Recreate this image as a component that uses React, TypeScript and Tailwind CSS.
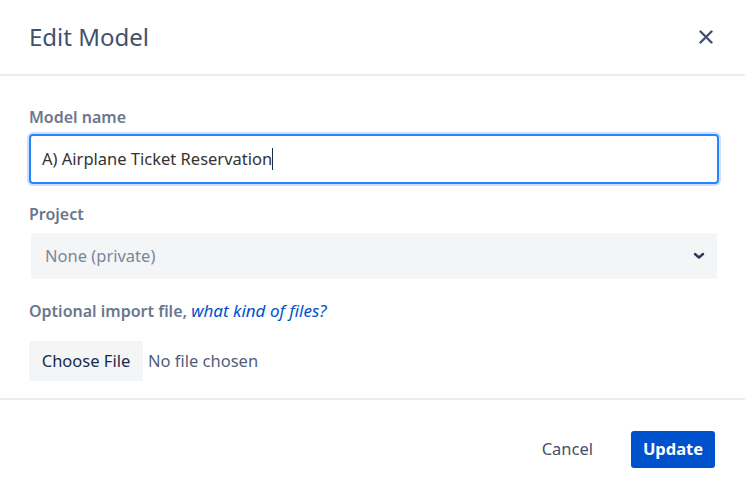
import { useState } from "react";

export default function App() {
  const [name] = useState("A) Airplane Ticket Reservation");

  return (
    <div className="w-[745px] h-[493px] bg-white text-[#172b4d] overflow-hidden [font-family:'Noto_Sans',sans-serif]">
      {/* Header */}
      <div className="h-[76px] flex items-center justify-between pl-[29px] pr-[32px] border-b-2 border-[#ebecf0]">
        <h1 className="text-[24px] text-[#42526e] font-normal leading-none">Edit Model</h1>
        <button className="text-[#42526e]">
          <svg width="14" height="14" viewBox="0 0 14 14">
            <path d="M1.5 1.5 L12.5 12.5 M12.5 1.5 L1.5 12.5" stroke="currentColor" strokeWidth="2.4" strokeLinecap="round" />
          </svg>
        </button>
      </div>

      {/* Body */}
      <div className="pl-[29px] pr-[26px] pt-[29px] pb-[17px] border-b-2 border-[#ebecf0] flex flex-col">
        <label className="text-[16px] leading-6 font-semibold text-[#6b778c]">Model name</label>
        <div className="mt-[5px] h-[50px] rounded-[4px] border-2 border-[#2684ff] ring-2 ring-[#cce0ff] flex items-center px-[11px] text-[16.5px] text-[#333]">
          <span>{name}</span>
          <span className="w-px h-[22px] bg-[#172b4d]" />
        </div>

        <label className="mt-[18px] text-[16px] leading-6 font-semibold text-[#6b778c]">Project</label>
        <div className="mt-[7px] mx-[2px] h-[46px] rounded-[3px] bg-[#f4f5f7] flex items-center justify-between pl-[14px] pr-[12px] text-[16.5px] text-[#7a869a]">
          <span>None (private)</span>
          <svg width="12" height="8" viewBox="0 0 12 8" className="text-[#2b3a58]">
            <path d="M2 2 L6 5.5 L10 2" stroke="currentColor" strokeWidth="2.4" fill="none" strokeLinecap="round" strokeLinejoin="round" />
          </svg>
        </div>

        <div className="mt-[20px] text-[16px] leading-6">
          <span className="font-semibold text-[#6b778c]">Optional import file, </span>
          <a className="italic text-[17px] text-[#0052cc]">what kind of files?</a>
        </div>

        <div className="mt-[18px] flex items-center">
          <button className="w-[114px] h-[40px] bg-[#f4f5f7] text-[16.5px] text-[#172b4d]">Choose File</button>
          <span className="ml-[5px] text-[16.5px] text-[#505f79]">No file chosen</span>
        </div>
      </div>

      {/* Footer */}
      <div className="flex items-center justify-end gap-[38px] pr-[30px] pt-[31px]">
        <button className="text-[16.5px] text-[#42526e]">Cancel</button>
        <button className="w-[84px] h-[37px] rounded-[3px] bg-[#0052cc] text-white text-[16.5px] font-bold">Update</button>
      </div>
    </div>
  );
}
